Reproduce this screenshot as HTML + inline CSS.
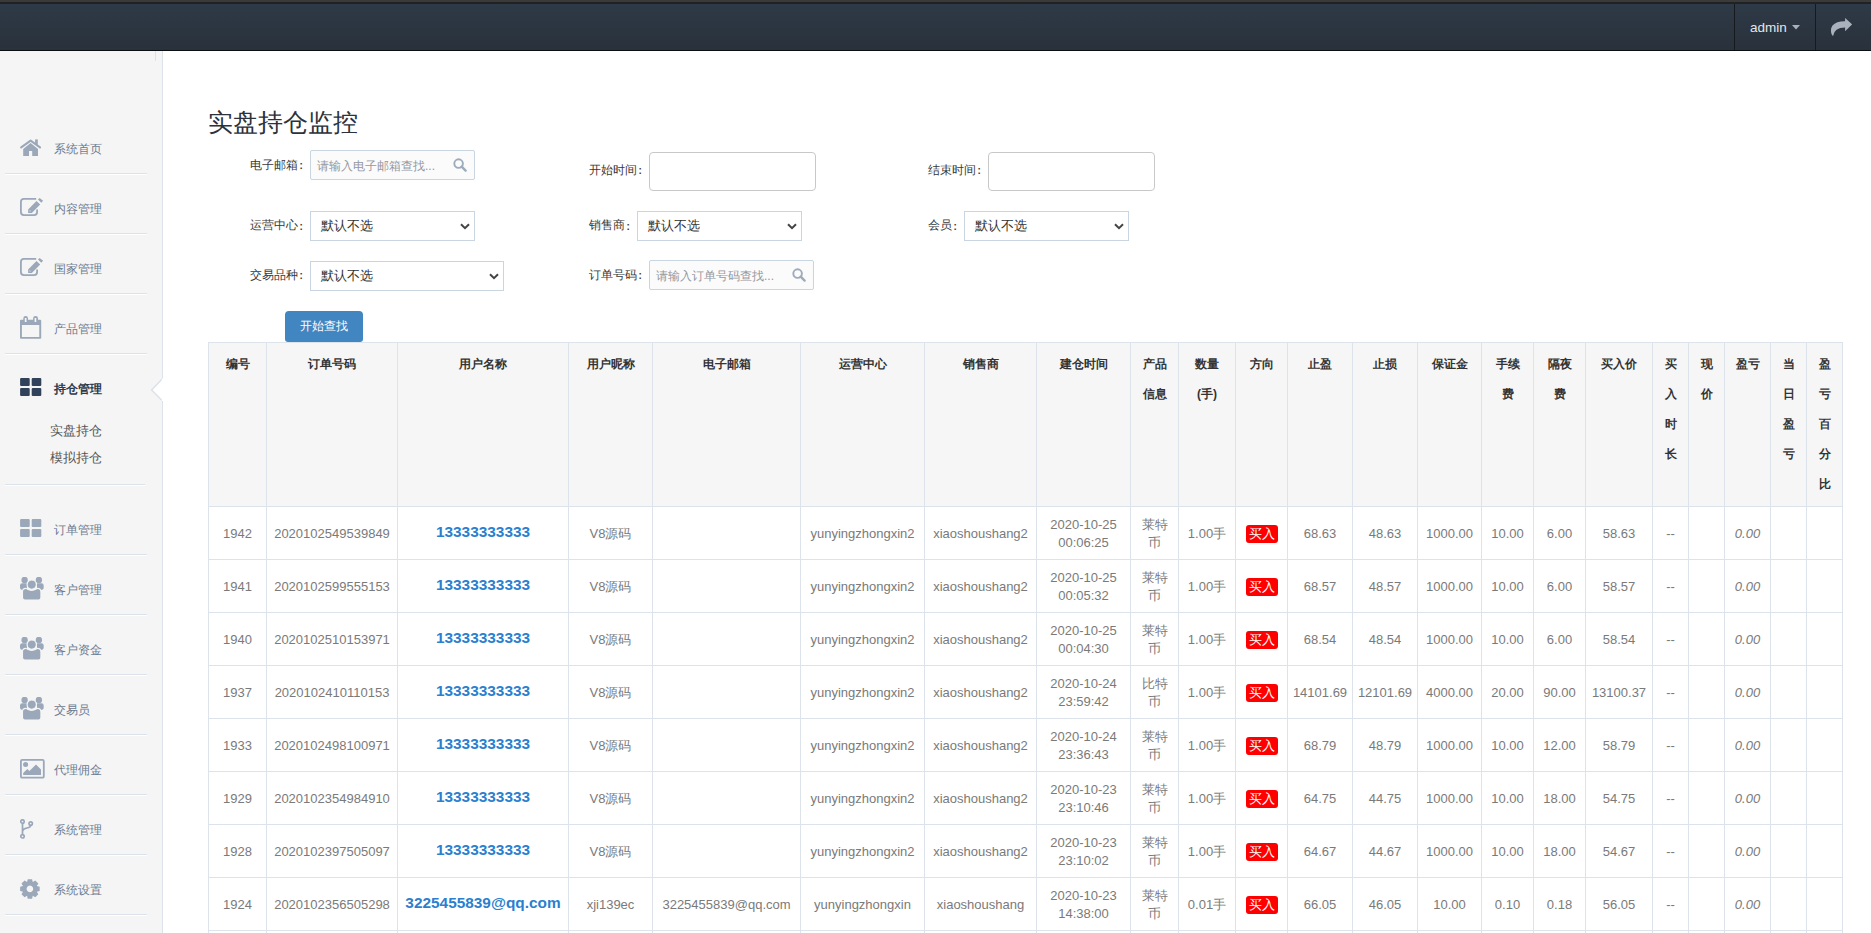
<!DOCTYPE html>
<html><head><meta charset="utf-8">
<style>
*{box-sizing:border-box}
html,body{margin:0;padding:0;width:1871px;height:933px;overflow:hidden;background:#fff;font-family:"Liberation Sans",sans-serif;}
.abs{position:absolute}
svg{display:block}
#top1{left:0;top:0;width:1871px;height:2px;background:#3a3a3a}
#top2{left:0;top:2px;width:1871px;height:2px;background:#222}
#nav{left:0;top:4px;width:1871px;height:46px;background:linear-gradient(#2e3a47,#29313b)}
#navb{left:0;top:50px;width:1871px;height:1px;background:#0a0f14}
.vsep{top:4px;width:1px;height:46px;background:#161a1f}
#admin{left:1750px;top:20px;color:#e4e7eb;font-size:13.5px;line-height:15px}
#side{left:0;top:51px;width:163px;height:882px;background:#f5f5f5;border-right:1px solid #dbe2ea}
.dv{left:5px;width:142px;height:2px;border-top:1px solid #dce2ea;background:#fff}
.mi{left:54px;font-size:12px;color:#6b7b91;height:16px;line-height:16px;white-space:nowrap}
.lbl{font-size:12px;color:#393939;line-height:16px;white-space:nowrap}
.inp{border:1px solid #c9d5e1;background:#fff;border-radius:2px}
.sel{border:1px solid #c9d5e1;background:#fff;font-size:13px;color:#333}
.ph{font-size:12px;color:#94989e;white-space:nowrap;line-height:16px}
table{border-collapse:collapse;table-layout:fixed;position:absolute;left:208px;top:342px}
td,th{border:1px solid #dde3eb;padding:0;text-align:center;overflow:hidden}
th{background:#f6f6f6;font-size:12px;font-weight:bold;color:#333;vertical-align:top;line-height:30px;padding-top:6px;height:164px}
td{height:53px;font-size:13px;color:#7a7a7a;line-height:18px;vertical-align:middle;padding-top:1px}
td.u{color:#2a7fcf;font-weight:bold;font-size:15.4px;padding-top:0;padding-bottom:2px}
.badge{display:inline-block;background:#f00;color:#fff;border-radius:3px;width:32px;height:18px;line-height:18px;font-size:13px;vertical-align:middle}
td i{font-style:italic}
</style></head><body>
<div class="abs" id="top1"></div><div class="abs" id="top2"></div>
<div class="abs" id="nav"></div><div class="abs" id="navb"></div>
<div class="abs vsep" style="left:1734px"></div>
<div class="abs vsep" style="left:1815px"></div>
<div class="abs" id="admin">admin</div>
<svg class="abs" style="left:1792px;top:25px" width="8" height="5" viewBox="0 0 8 5"><path d="M0 0 H8 L4 4.5Z" fill="#a9b0b8"/></svg>
<svg class="abs" style="left:1830px;top:17px" width="22" height="20" viewBox="0 0 22 20"><path fill="#a9b2bc" d="M22.2 7.4 L15.1 1 V4.2 Q6 4.2 2.5 8.5 Q0 12 1.5 17 L3 19.3 Q3.5 15 6.5 12.8 Q9.5 10.6 15.1 10.6 V14.2 Z"/></svg>
<div class="abs" id="side"></div>
<div class="abs" style="left:155px;top:51px;width:1px;height:10px;background:#dbe2ea"></div>

<div class="abs dv" style="top:173px;width:142px"></div>
<div class="abs dv" style="top:233px;width:142px"></div>
<div class="abs dv" style="top:293px;width:142px"></div>
<div class="abs dv" style="top:353px;width:142px"></div>
<div class="abs dv" style="top:484px;width:140px"></div>
<div class="abs dv" style="top:554px;width:142px"></div>
<div class="abs dv" style="top:614px;width:142px"></div>
<div class="abs dv" style="top:674px;width:142px"></div>
<div class="abs dv" style="top:734px;width:142px"></div>
<div class="abs dv" style="top:794px;width:142px"></div>
<div class="abs dv" style="top:854px;width:142px"></div>
<div class="abs dv" style="top:914px;width:142px"></div>
<div class="abs" style="left:20px;top:139px"><svg width="22" height="18" viewBox="0 0 22 18"><path fill="none" stroke="#9aa8b9" stroke-width="2.1" stroke-linecap="round" stroke-linejoin="round" d="M1.2 8.3 L10.6 1.6 L20 8.3"/><rect x="15.1" y="0.4" width="2.7" height="5.5" fill="#9aa8b9"/><path fill="#9aa8b9" d="M10.6 3.9 L18 10 V17 H12.2 V12 H9 V17 H3.2 V10 Z"/></svg></div>
<div class="abs mi" style="top:141.0px;">系统首页</div>
<div class="abs" style="left:20px;top:198px"><svg width="24" height="19" viewBox="0 0 24 19"><path fill="none" stroke="#9aa8b9" stroke-width="1.8" d="M16.2 0.9 H3.9 Q0.9 0.9 0.9 3.9 V14.1 Q0.9 17.1 3.9 17.1 H14.1 Q17.1 17.1 17.1 14.1 V11.4"/><path fill="#9aa8b9" d="M8.15 11.4 L16.5 3 L20.2 6.6 L11.8 14.9 H8.15 Z M18 1.4 L19.7 0 L23.1 2.7 L21.3 4.8 Z"/><path fill="#f5f5f5" d="M9.6 11.9 L11 13.3 L9.6 13.6 Z"/></svg></div>
<div class="abs mi" style="top:200.5px;">内容管理</div>
<div class="abs" style="left:20px;top:258px"><svg width="24" height="19" viewBox="0 0 24 19"><path fill="none" stroke="#9aa8b9" stroke-width="1.8" d="M16.2 0.9 H3.9 Q0.9 0.9 0.9 3.9 V14.1 Q0.9 17.1 3.9 17.1 H14.1 Q17.1 17.1 17.1 14.1 V11.4"/><path fill="#9aa8b9" d="M8.15 11.4 L16.5 3 L20.2 6.6 L11.8 14.9 H8.15 Z M18 1.4 L19.7 0 L23.1 2.7 L21.3 4.8 Z"/><path fill="#f5f5f5" d="M9.6 11.9 L11 13.3 L9.6 13.6 Z"/></svg></div>
<div class="abs mi" style="top:260.5px;">国家管理</div>
<div class="abs" style="left:20px;top:316px"><svg width="22" height="23" viewBox="0 0 22 23"><path fill="#9aa8b9" fill-rule="evenodd" d="M0 4.7 Q0 3.7 1 3.7 H3.3 V2.3 Q3.3 0 5.65 0 Q8 0 8 2.3 V3.7 H13.1 V2.3 Q13.1 0 15.55 0 Q18 0 18 2.3 V3.7 H20.2 Q21.2 3.7 21.2 4.7 V21.8 Q21.2 22.8 20.2 22.8 H1 Q0 22.8 0 21.8 Z M1.9 8.9 V21 H19.3 V8.9 Z M4.8 1.9 V6 H6.5 V1.9 Z M14.6 1.9 V6 H16.3 V1.9 Z"/></svg></div>
<div class="abs mi" style="top:320.5px;">产品管理</div>
<div class="abs" style="left:20px;top:378px"><svg width="22" height="19" viewBox="0 0 22 19"><rect x="0.1" y="0" width="9.6" height="8" rx="1.1" fill="#31435a"/><rect x="11.7" y="0" width="9.6" height="8" rx="1.1" fill="#31435a"/><rect x="0.1" y="10" width="9.6" height="8" rx="1.1" fill="#31435a"/><rect x="11.7" y="10" width="9.6" height="8" rx="1.1" fill="#31435a"/></svg></div>
<div class="abs mi" style="top:380.5px;font-weight:bold;color:#2d3a4b">持仓管理</div>
<div class="abs" style="left:20px;top:519px"><svg width="22" height="19" viewBox="0 0 22 19"><rect x="0.1" y="0" width="9.6" height="8" rx="1.1" fill="#9aa8b9"/><rect x="11.7" y="0" width="9.6" height="8" rx="1.1" fill="#9aa8b9"/><rect x="0.1" y="10" width="9.6" height="8" rx="1.1" fill="#9aa8b9"/><rect x="11.7" y="10" width="9.6" height="8" rx="1.1" fill="#9aa8b9"/></svg></div>
<div class="abs mi" style="top:521.7px;">订单管理</div>
<div class="abs" style="left:20px;top:577px"><svg width="25" height="24" viewBox="0 0 25 24"><circle cx="4.6" cy="2.95" r="3.2" fill="#9aa8b9"/><circle cx="18.9" cy="2.95" r="3.2" fill="#9aa8b9"/><path fill="#9aa8b9" d="M0 8.6 Q0 6.3 2.3 6.3 H6.9 V12.6 Q4.8 12.9 3 12.9 Q0 12.9 0 10.6 Z M23.7 8.6 Q23.7 6.3 21.4 6.3 H17 V12.6 Q19.1 12.9 20.9 12.9 Q23.7 12.9 23.7 10.6 Z"/><circle cx="11.7" cy="7.6" r="4.6" fill="#9aa8b9" stroke="#f5f5f5" stroke-width="1.1"/><path fill="#9aa8b9" stroke="#f5f5f5" stroke-width="1.1" d="M2.5 14.8 Q2.5 11.4 5.9 11.4 Q8.6 13.4 11.7 13.4 Q14.8 13.4 17.5 11.4 Q20.9 11.4 20.9 14.8 V20.4 Q20.9 23 18.5 23 H4.9 Q2.5 23 2.5 20.4 Z"/></svg></div>
<div class="abs mi" style="top:581.7px;">客户管理</div>
<div class="abs" style="left:20px;top:637px"><svg width="25" height="24" viewBox="0 0 25 24"><circle cx="4.6" cy="2.95" r="3.2" fill="#9aa8b9"/><circle cx="18.9" cy="2.95" r="3.2" fill="#9aa8b9"/><path fill="#9aa8b9" d="M0 8.6 Q0 6.3 2.3 6.3 H6.9 V12.6 Q4.8 12.9 3 12.9 Q0 12.9 0 10.6 Z M23.7 8.6 Q23.7 6.3 21.4 6.3 H17 V12.6 Q19.1 12.9 20.9 12.9 Q23.7 12.9 23.7 10.6 Z"/><circle cx="11.7" cy="7.6" r="4.6" fill="#9aa8b9" stroke="#f5f5f5" stroke-width="1.1"/><path fill="#9aa8b9" stroke="#f5f5f5" stroke-width="1.1" d="M2.5 14.8 Q2.5 11.4 5.9 11.4 Q8.6 13.4 11.7 13.4 Q14.8 13.4 17.5 11.4 Q20.9 11.4 20.9 14.8 V20.4 Q20.9 23 18.5 23 H4.9 Q2.5 23 2.5 20.4 Z"/></svg></div>
<div class="abs mi" style="top:641.7px;">客户资金</div>
<div class="abs" style="left:20px;top:697px"><svg width="25" height="24" viewBox="0 0 25 24"><circle cx="4.6" cy="2.95" r="3.2" fill="#9aa8b9"/><circle cx="18.9" cy="2.95" r="3.2" fill="#9aa8b9"/><path fill="#9aa8b9" d="M0 8.6 Q0 6.3 2.3 6.3 H6.9 V12.6 Q4.8 12.9 3 12.9 Q0 12.9 0 10.6 Z M23.7 8.6 Q23.7 6.3 21.4 6.3 H17 V12.6 Q19.1 12.9 20.9 12.9 Q23.7 12.9 23.7 10.6 Z"/><circle cx="11.7" cy="7.6" r="4.6" fill="#9aa8b9" stroke="#f5f5f5" stroke-width="1.1"/><path fill="#9aa8b9" stroke="#f5f5f5" stroke-width="1.1" d="M2.5 14.8 Q2.5 11.4 5.9 11.4 Q8.6 13.4 11.7 13.4 Q14.8 13.4 17.5 11.4 Q20.9 11.4 20.9 14.8 V20.4 Q20.9 23 18.5 23 H4.9 Q2.5 23 2.5 20.4 Z"/></svg></div>
<div class="abs mi" style="top:701.7px;">交易员</div>
<div class="abs" style="left:20px;top:759px"><svg width="26" height="21" viewBox="0 0 26 21"><rect x="0.9" y="0.9" width="22.9" height="17.8" rx="1.3" fill="none" stroke="#9aa8b9" stroke-width="1.8"/><circle cx="5.6" cy="5.5" r="2.5" fill="#9aa8b9"/><path fill="#9aa8b9" d="M3.2 14 L7.3 10.1 L9.4 12 L16 5.6 L21 10.4 V15.9 H3.2 Z"/></svg></div>
<div class="abs mi" style="top:761.7px;">代理佣金</div>
<div class="abs" style="left:20px;top:819px"><svg width="14" height="21" viewBox="0 0 14 21"><g fill="none" stroke="#9aa8b9" stroke-width="1.7"><circle cx="2.5" cy="2.5" r="1.7"/><circle cx="10.7" cy="4.5" r="1.7"/><circle cx="2.5" cy="17.3" r="1.7"/><path d="M2.5 4.2 V15.6 M2.5 12 Q3 9.8 7 9 Q10.7 8.2 10.7 6.2"/></g></svg></div>
<div class="abs mi" style="top:821.7px;">系统管理</div>
<div class="abs" style="left:20px;top:879px"><svg width="20" height="20" viewBox="-0.1 -0.1 20.4 20.4"><path fill="#9aa8b9" fill-rule="evenodd" d="M17.03 7.11 L19.95 7.77 L19.95 12.23 L17.03 12.89 L17.01 12.93 L18.61 15.46 L15.46 18.61 L12.93 17.01 L12.89 17.03 L12.23 19.95 L7.77 19.95 L7.11 17.03 L7.07 17.01 L4.54 18.61 L1.39 15.46 L2.99 12.93 L2.97 12.89 L0.05 12.23 L0.05 7.77 L2.97 7.11 L2.99 7.07 L1.39 4.54 L4.54 1.39 L7.07 2.99 L7.11 2.97 L7.77 0.05 L12.23 0.05 L12.89 2.97 L12.93 2.99 L15.46 1.39 L18.61 4.54 L17.01 7.07Z M10 6.6 A3.4 3.4 0 1 0 10.01 6.6 Z"/></svg></div>
<div class="abs mi" style="top:881.7px;">系统设置</div>
<div class="abs mi" style="left:50px;top:423.4px;color:#555;font-size:13px">实盘持仓</div>
<div class="abs mi" style="left:50px;top:450px;color:#555;font-size:13px">模拟持仓</div>
<svg class="abs" style="left:150px;top:377px" width="14" height="26" viewBox="0 0 14 26"><path d="M12.6 1.4 L1.6 13 L12.6 24.1 L14 24.1 V1.4 Z" fill="#fff"/><path d="M12.6 1.4 L1.6 13 L12.6 24.1" fill="none" stroke="#d8e1ea" stroke-width="1.4"/><rect x="11.8" y="1.6" width="2.2" height="22.4" fill="#fff"/></svg>
<div class="abs" style="left:207.5px;top:107px;font-size:25px;line-height:30px;color:#2b323b;white-space:nowrap">实盘持仓监控</div>
<div class="abs lbl" style="left:250px;top:156.6px">电子邮箱<span style="font-size:10px;font-weight:bold;margin-left:1.5px;position:relative;top:0.5px">:</span></div>
<div class="abs lbl" style="left:250px;top:217.3px">运营中心<span style="font-size:10px;font-weight:bold;margin-left:1.5px;position:relative;top:0.5px">:</span></div>
<div class="abs lbl" style="left:250px;top:266.7px">交易品种<span style="font-size:10px;font-weight:bold;margin-left:1.5px;position:relative;top:0.5px">:</span></div>
<div class="abs lbl" style="left:589px;top:161.8px">开始时间<span style="font-size:10px;font-weight:bold;margin-left:1.5px;position:relative;top:0.5px">:</span></div>
<div class="abs lbl" style="left:589px;top:217.0px">销售商<span style="font-size:10px;font-weight:bold;margin-left:1.5px;position:relative;top:0.5px">:</span></div>
<div class="abs lbl" style="left:589px;top:266.7px">订单号码<span style="font-size:10px;font-weight:bold;margin-left:1.5px;position:relative;top:0.5px">:</span></div>
<div class="abs lbl" style="left:928px;top:161.8px">结束时间<span style="font-size:10px;font-weight:bold;margin-left:1.5px;position:relative;top:0.5px">:</span></div>
<div class="abs lbl" style="left:928px;top:217.0px">会员<span style="font-size:10px;font-weight:bold;margin-left:1.5px;position:relative;top:0.5px">:</span></div>
<div class="abs inp" style="left:310px;top:150px;width:165px;height:30px;background:#fbfbfc"></div>
<div class="abs ph" style="left:317px;top:157.5px">请输入电子邮箱查找...</div>
<svg class="abs" style="left:453px;top:158px" width="14" height="14" viewBox="0 0 14 14"><circle cx="5.6" cy="5.6" r="4.3" fill="none" stroke="#9dabbb" stroke-width="1.9"/><path d="M8.7 8.7 L12.6 12.6" stroke="#9dabbb" stroke-width="2.4" stroke-linecap="round"/></svg>
<div class="abs inp" style="left:649px;top:260px;width:165px;height:30px;background:#fbfbfc"></div>
<div class="abs ph" style="left:656px;top:267.5px">请输入订单号码查找...</div>
<svg class="abs" style="left:792px;top:268px" width="14" height="14" viewBox="0 0 14 14"><circle cx="5.6" cy="5.6" r="4.3" fill="none" stroke="#9dabbb" stroke-width="1.9"/><path d="M8.7 8.7 L12.6 12.6" stroke="#9dabbb" stroke-width="2.4" stroke-linecap="round"/></svg>
<div class="abs" style="left:649px;top:152px;width:167px;height:39px;border:1px solid #c8c8c8;border-radius:4px"></div>
<div class="abs" style="left:988px;top:152px;width:167px;height:39px;border:1px solid #c8c8c8;border-radius:4px"></div>
<div class="abs sel" style="left:310px;top:211px;width:165px;height:30px"></div>
<div class="abs" style="left:321px;top:218px;font-size:13px;line-height:16px;color:#333;white-space:nowrap">默认不选</div>
<svg class="abs" style="left:460px;top:223px" width="10" height="7" viewBox="0 0 10 7"><path d="M1 1.2 L5 5.2 L9 1.2" fill="none" stroke="#444" stroke-width="2"/></svg>
<div class="abs sel" style="left:637px;top:211px;width:165px;height:30px"></div>
<div class="abs" style="left:648px;top:218px;font-size:13px;line-height:16px;color:#333;white-space:nowrap">默认不选</div>
<svg class="abs" style="left:787px;top:223px" width="10" height="7" viewBox="0 0 10 7"><path d="M1 1.2 L5 5.2 L9 1.2" fill="none" stroke="#444" stroke-width="2"/></svg>
<div class="abs sel" style="left:964px;top:211px;width:165px;height:30px"></div>
<div class="abs" style="left:975px;top:218px;font-size:13px;line-height:16px;color:#333;white-space:nowrap">默认不选</div>
<svg class="abs" style="left:1114px;top:223px" width="10" height="7" viewBox="0 0 10 7"><path d="M1 1.2 L5 5.2 L9 1.2" fill="none" stroke="#444" stroke-width="2"/></svg>
<div class="abs sel" style="left:310px;top:261px;width:194px;height:30px"></div>
<div class="abs" style="left:321px;top:268px;font-size:13px;line-height:16px;color:#333;white-space:nowrap">默认不选</div>
<svg class="abs" style="left:489px;top:273px" width="10" height="7" viewBox="0 0 10 7"><path d="M1 1.2 L5 5.2 L9 1.2" fill="none" stroke="#444" stroke-width="2"/></svg>
<div class="abs" style="left:285px;top:311px;width:78px;height:31px;background:#4185c1;border-radius:4px 4px 3px 3px;color:#fff;font-size:12px;line-height:30px;text-align:center">开始查找</div>
<table><colgroup><col style="width:58px"><col style="width:131px"><col style="width:171px"><col style="width:84px"><col style="width:148px"><col style="width:124px"><col style="width:112px"><col style="width:94px"><col style="width:48px"><col style="width:57px"><col style="width:52px"><col style="width:65px"><col style="width:65px"><col style="width:64px"><col style="width:52px"><col style="width:52px"><col style="width:67px"><col style="width:36px"><col style="width:36px"><col style="width:46px"><col style="width:36px"><col style="width:36px"></colgroup>
<tr><th>编号</th><th>订单号码</th><th>用户名称</th><th>用户昵称</th><th>电子邮箱</th><th>运营中心</th><th>销售商</th><th>建仓时间</th><th>产品<br>信息</th><th>数量<br>(手)</th><th>方向</th><th>止盈</th><th>止损</th><th>保证金</th><th>手续<br>费</th><th>隔夜<br>费</th><th>买入价</th><th>买<br>入<br>时<br>长</th><th>现<br>价</th><th>盈亏</th><th>当<br>日<br>盈<br>亏</th><th>盈<br>亏<br>百<br>分<br>比</th></tr>
<tr><td>1942</td><td>2020102549539849</td><td class="u">13333333333</td><td>V8源码</td><td></td><td>yunyingzhongxin2</td><td>xiaoshoushang2</td><td>2020-10-25<br>00:06:25</td><td>莱特<br>币</td><td>1.00手</td><td><span class="badge">买入</span></td><td>68.63</td><td>48.63</td><td>1000.00</td><td>10.00</td><td>6.00</td><td>58.63</td><td>--</td><td></td><td><i>0.00</i></td><td></td><td></td></tr>
<tr><td>1941</td><td>2020102599555153</td><td class="u">13333333333</td><td>V8源码</td><td></td><td>yunyingzhongxin2</td><td>xiaoshoushang2</td><td>2020-10-25<br>00:05:32</td><td>莱特<br>币</td><td>1.00手</td><td><span class="badge">买入</span></td><td>68.57</td><td>48.57</td><td>1000.00</td><td>10.00</td><td>6.00</td><td>58.57</td><td>--</td><td></td><td><i>0.00</i></td><td></td><td></td></tr>
<tr><td>1940</td><td>2020102510153971</td><td class="u">13333333333</td><td>V8源码</td><td></td><td>yunyingzhongxin2</td><td>xiaoshoushang2</td><td>2020-10-25<br>00:04:30</td><td>莱特<br>币</td><td>1.00手</td><td><span class="badge">买入</span></td><td>68.54</td><td>48.54</td><td>1000.00</td><td>10.00</td><td>6.00</td><td>58.54</td><td>--</td><td></td><td><i>0.00</i></td><td></td><td></td></tr>
<tr><td>1937</td><td>2020102410110153</td><td class="u">13333333333</td><td>V8源码</td><td></td><td>yunyingzhongxin2</td><td>xiaoshoushang2</td><td>2020-10-24<br>23:59:42</td><td>比特<br>币</td><td>1.00手</td><td><span class="badge">买入</span></td><td>14101.69</td><td>12101.69</td><td>4000.00</td><td>20.00</td><td>90.00</td><td>13100.37</td><td>--</td><td></td><td><i>0.00</i></td><td></td><td></td></tr>
<tr><td>1933</td><td>2020102498100971</td><td class="u">13333333333</td><td>V8源码</td><td></td><td>yunyingzhongxin2</td><td>xiaoshoushang2</td><td>2020-10-24<br>23:36:43</td><td>莱特<br>币</td><td>1.00手</td><td><span class="badge">买入</span></td><td>68.79</td><td>48.79</td><td>1000.00</td><td>10.00</td><td>12.00</td><td>58.79</td><td>--</td><td></td><td><i>0.00</i></td><td></td><td></td></tr>
<tr><td>1929</td><td>2020102354984910</td><td class="u">13333333333</td><td>V8源码</td><td></td><td>yunyingzhongxin2</td><td>xiaoshoushang2</td><td>2020-10-23<br>23:10:46</td><td>莱特<br>币</td><td>1.00手</td><td><span class="badge">买入</span></td><td>64.75</td><td>44.75</td><td>1000.00</td><td>10.00</td><td>18.00</td><td>54.75</td><td>--</td><td></td><td><i>0.00</i></td><td></td><td></td></tr>
<tr><td>1928</td><td>2020102397505097</td><td class="u">13333333333</td><td>V8源码</td><td></td><td>yunyingzhongxin2</td><td>xiaoshoushang2</td><td>2020-10-23<br>23:10:02</td><td>莱特<br>币</td><td>1.00手</td><td><span class="badge">买入</span></td><td>64.67</td><td>44.67</td><td>1000.00</td><td>10.00</td><td>18.00</td><td>54.67</td><td>--</td><td></td><td><i>0.00</i></td><td></td><td></td></tr>
<tr><td>1924</td><td>2020102356505298</td><td class="u">3225455839@qq.com</td><td>xji139ec</td><td>3225455839@qq.com</td><td>yunyingzhongxin</td><td>xiaoshoushang</td><td>2020-10-23<br>14:38:00</td><td>莱特<br>币</td><td>0.01手</td><td><span class="badge">买入</span></td><td>66.05</td><td>46.05</td><td>10.00</td><td>0.10</td><td>0.18</td><td>56.05</td><td>--</td><td></td><td><i>0.00</i></td><td></td><td></td></tr>
<tr><td>1923</td><td>2020102356505211</td><td class="u">13333333333</td><td>V8源码</td><td></td><td>yunyingzhongxin2</td><td>xiaoshoushang2</td><td>2020-10-23<br>14:30:00</td><td>莱特<br>币</td><td>1.00手</td><td><span class="badge">买入</span></td><td>66.05</td><td>46.05</td><td>1000.00</td><td>10.00</td><td>18.00</td><td>56.05</td><td>--</td><td></td><td><i>0.00</i></td><td></td><td></td></tr>
</table>
</body></html>
